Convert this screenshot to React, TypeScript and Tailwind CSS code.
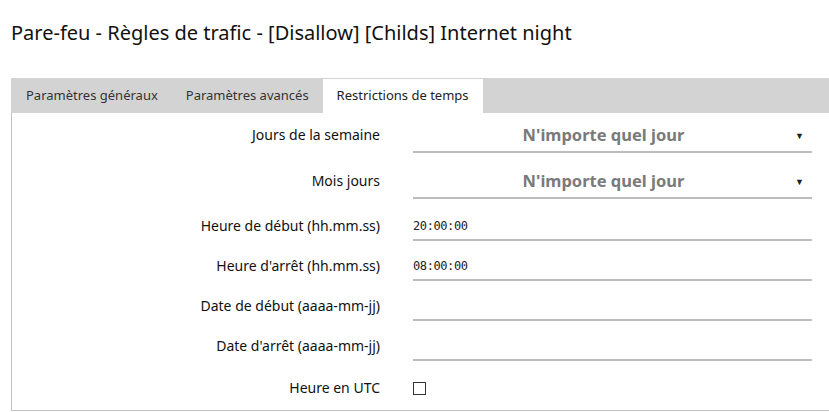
import React from "react";

const tabs = ["Paramètres généraux", "Paramètres avancés", "Restrictions de temps"];

function Row({ label, children, select }: { label: string; children?: React.ReactNode; select?: boolean }) {
  return (
    <div className={`flex items-start ${select ? "h-[36px] mb-[10px]" : "h-[32px] mb-[8px]"}`}>
      <div className={`w-[368px] text-right text-[14px] leading-[20px] text-[#111] ${select ? "pt-[8px]" : "pt-[7px]"}`}>
        {label}
      </div>
      <div className="ml-[33px] w-[399px] h-full border-b-2 border-[#bdbdbd]">{children}</div>
    </div>
  );
}

function Select() {
  return (
    <div className="relative flex h-full items-start justify-center pt-[8px] pr-[18px]">
      <span className="text-[16.5px] leading-[20px] font-bold text-[#7a7a7a]">N'importe quel jour</span>
      <span className="absolute right-[8px] top-[14px] text-[9px] leading-none text-[#222]">▼</span>
    </div>
  );
}

function TimeValue({ v }: { v: string }) {
  return <div className="pt-[7px] text-[12px] leading-[20px] text-[#222] font-['DejaVu_Sans_Mono',monospace] tracking-[-0.4px]">{v}</div>;
}

export default function App() {
  return (
    <div className="w-[829px] h-[412px] overflow-hidden bg-white font-['Noto_Sans',sans-serif] pl-[11px]">
      <h1 className="pt-[20px] text-[20px] leading-[26px] text-[#111]">
        Pare-feu - Règles de trafic - [Disallow] [Childs] Internet night
      </h1>

      <div className="mt-[32px] flex h-[35px] bg-[#d3d3d3] pt-px pl-[1px]">
        {tabs.map((t, i) => (
          <div
            key={t}
            className={`flex items-center px-[14px] text-[13px] ${
              i === 2 ? "bg-white text-[#222]" : "text-[#333]"
            }`}
          >
            {t}
          </div>
        ))}
      </div>

      <div className="border-l border-b border-[#c2c2c2] pt-[4px] h-[298px]">
        <Row label="Jours de la semaine" select>
          <Select />
        </Row>
        <Row label="Mois jours" select>
          <Select />
        </Row>
        <Row label="Heure de début (hh.mm.ss)">
          <TimeValue v="20:00:00" />
        </Row>
        <Row label="Heure d'arrêt (hh.mm.ss)">
          <TimeValue v="08:00:00" />
        </Row>
        <Row label="Date de début (aaaa-mm-jj)" />
        <Row label="Date d'arrêt (aaaa-mm-jj)" />
        <div className="flex items-center h-[20px] mt-[17px]">
          <div className="w-[368px] text-right text-[14px] leading-[20px] text-[#111]">Heure en UTC</div>
          <div className="ml-[33px] w-[13px] h-[13px] border border-[#333] bg-white" />
        </div>
      </div>
    </div>
  );
}
